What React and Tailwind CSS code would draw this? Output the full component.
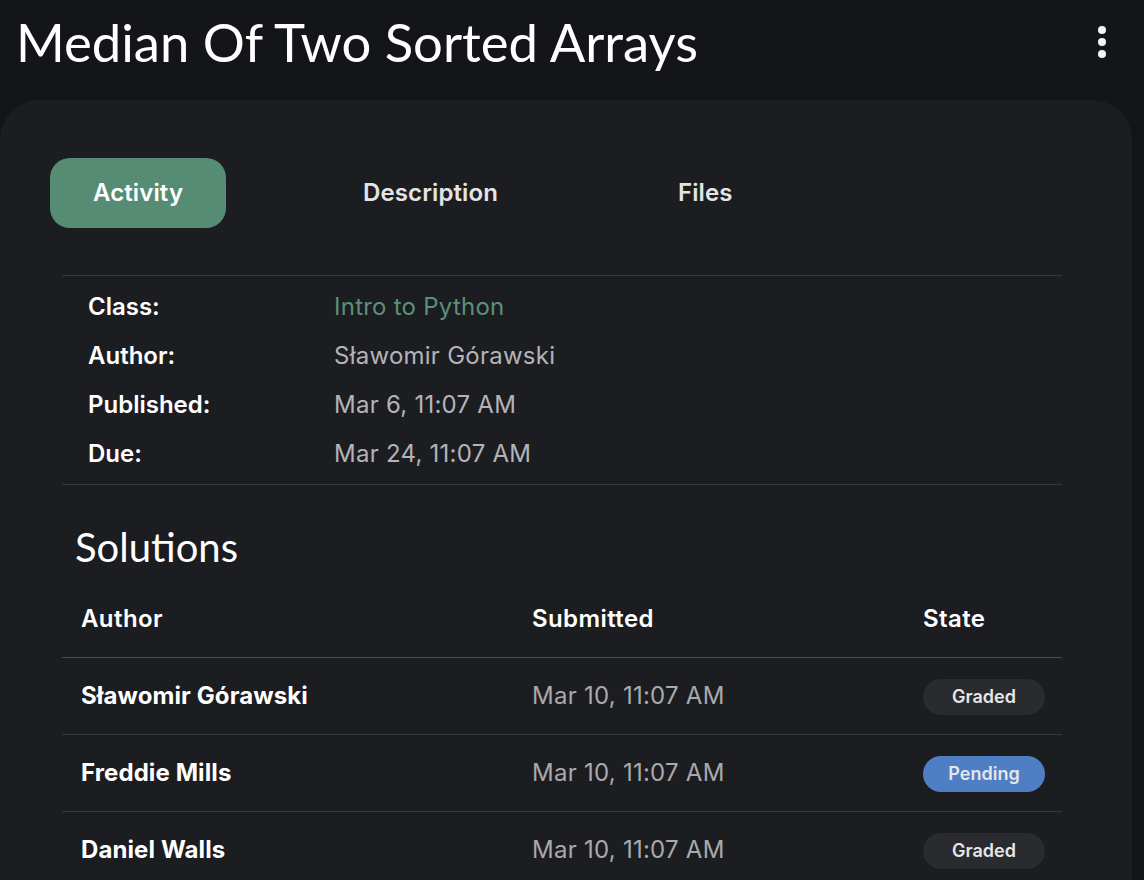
const info = [
    { label: "Class:", value: "Intro to Python", link: true },
    { label: "Author:", value: "Sławomir Górawski" },
    { label: "Published:", value: "Mar 6, 11:07 AM" },
    { label: "Due:", value: "Mar 24, 11:07 AM" },
]

const solutions = [
    { name: "Sławomir Górawski", date: "Mar 10, 11:07 AM", state: "Graded" },
    { name: "Freddie Mills", date: "Mar 10, 11:07 AM", state: "Pending" },
    { name: "Daniel Walls", date: "Mar 10, 11:07 AM", state: "Graded" },
]

const inter = "font-['Inter','Liberation_Sans',sans-serif]"
const heading = "font-['Lato','Open_Sans',sans-serif]"

const Badge = ({ state }) => {
    const color = state === "Pending" ? "bg-[#4e7ec4]" : "bg-[#2a2b2f]"
    return (
        <span className={`${color} inline-flex items-center justify-center w-[122px] h-[36px] rounded-full text-[18px] font-semibold text-[#e6e6e8]`}>
            {state}
        </span>
    )
}

const App = () => {
    return (
        <div className={`${inter} min-h-[880px] h-[880px] overflow-hidden bg-[#141519] text-white`}>
            <div className="flex items-start justify-between h-[100px] pl-[16px] pr-[38px]">
                <h1 className={`${heading} text-[52.6px] leading-[84px] text-white`}>Median Of Two Sorted Arrays</h1>
                <svg className="mt-[26px]" width="8" height="32" viewBox="0 0 8 32">
                    <circle cx="4" cy="4" r="4" fill="#f4f5f8" />
                    <circle cx="4" cy="16" r="4" fill="#f4f5f8" />
                    <circle cx="4" cy="28" r="4" fill="#f4f5f8" />
                </svg>
            </div>

            <div className="mr-[12px] h-[900px] rounded-[40px] bg-[#1c1d21] pt-[58px]">
                <div className="flex gap-[94px] pl-[50px]">
                    <button className="h-[70px] px-[43px] rounded-[20px] bg-[#578c74] text-[24px] tracking-[0.1px] font-semibold text-white">
                        Activity
                    </button>
                    <button className="h-[70px] px-[43px] text-[24px] tracking-[0.1px] font-semibold text-[#e4e4e6]">
                        Description
                    </button>
                    <button className="h-[70px] px-[43px] text-[24px] tracking-[0.1px] font-semibold text-[#e4e4e6]">
                        Files
                    </button>
                </div>

                <div className="ml-[62px] w-[1000px]">
                    <div className="mt-[47px] border-t border-b border-[#35363a] py-[6px]">
                        {info.map((row) => (
                            <div key={row.label} className="flex items-center h-[49px] pl-[26px]">
                                <span className="w-[246px] text-[24px] font-semibold text-white">{row.label}</span>
                                <span className={`text-[24px] tracking-[0.25px] ${row.link ? "text-[#5b9079]" : "text-[#b4b4b8]"}`}>{row.value}</span>
                            </div>
                        ))}
                    </div>

                    <h2 className={`${heading} mt-[38px] pl-[13px] text-[40px] leading-[48px] text-white`}>Solutions</h2>

                    <div className="mt-[10px]">
                        <div className="grid grid-cols-[451px_391px_1fr] items-center h-[77px] pl-[19px] border-b border-[#4a4b4f] text-[24px] tracking-[0.4px] font-semibold text-white">
                            <span>Author</span>
                            <span>Submitted</span>
                            <span>State</span>
                        </div>
                        {solutions.map((s, i) => (
                            <div key={i} className="grid grid-cols-[451px_391px_1fr] items-center h-[77px] pl-[19px] border-b border-[#35363a] text-[24px]">
                                <span className="font-bold tracking-[0.1px] text-white">{s.name}</span>
                                <span className="tracking-[0.25px] text-[#a9a9ad]">{s.date}</span>
                                <span><Badge state={s.state} /></span>
                            </div>
                        ))}
                    </div>
                </div>
            </div>
        </div>
    )
}

export default App
